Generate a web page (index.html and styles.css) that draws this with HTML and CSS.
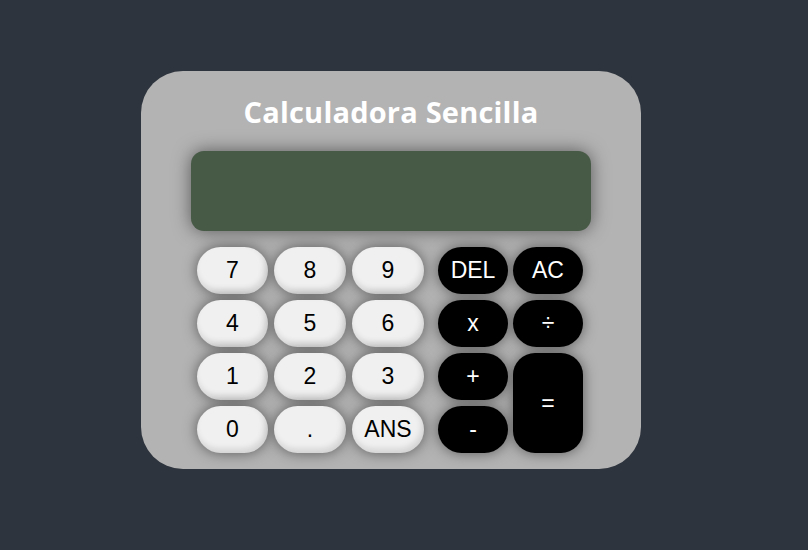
FILE: index.html
```html
<!DOCTYPE html>
<html lang="es">
<head>
<meta charset="utf-8">
<title>Calculadora Sencilla</title>
<link rel="stylesheet" href="styles.css">
</head>
<body>
<main class="page">
  <section class="calc">
    <h1 class="title">Calculadora Sencilla</h1>
    <div class="display"></div>
    <div class="keys">
      <div class="pad">
        <button class="key light">7</button>
        <button class="key light">8</button>
        <button class="key light">9</button>
        <button class="key light">4</button>
        <button class="key light">5</button>
        <button class="key light">6</button>
        <button class="key light">1</button>
        <button class="key light">2</button>
        <button class="key light">3</button>
        <button class="key light">0</button>
        <button class="key light">.</button>
        <button class="key light">ANS</button>
      </div>
      <div class="ops">
        <button class="key dark">DEL</button>
        <button class="key dark">AC</button>
        <button class="key dark">x</button>
        <button class="key dark">÷</button>
        <button class="key dark">+</button>
        <button class="key dark equals">=</button>
        <button class="key dark">-</button>
      </div>
    </div>
  </section>
</main>
</body>
</html>
```

FILE: styles.css
```css
* { box-sizing: border-box; }
html, body { margin: 0; padding: 0; }
body {
  background: #2e343d;
  width: 808px;
  height: 550px;
  overflow: hidden;
  font-family: "Liberation Sans", Arial, sans-serif;
}
.page {
  padding-top: 71px;
  padding-left: 141px;
}
.calc {
  width: 500px;
  height: 398px;
  background: #b3b3b3;
  border-radius: 42px;
  padding: 23px 50px 0 50px;
}
.title {
  margin: 0;
  height: 57px;
  text-align: center;
  color: #ffffff;
  font-family: "Open Sans", "DejaVu Sans", sans-serif;
  font-weight: 700;
  font-size: 29px;
  letter-spacing: 0.2px;
  line-height: 36px;
}
.display {
  width: 400px;
  height: 80px;
  background: #475a46;
  border-radius: 13px;
  box-shadow: 0 0 18px rgba(0, 0, 0, 0.5);
}
.keys {
  display: flex;
  margin-top: 16px;
  padding-left: 6px;
  gap: 14px;
}
.pad {
  display: grid;
  grid-template-columns: 71px 72px 72px;
  grid-auto-rows: 47px;
  column-gap: 6px;
  row-gap: 6px;
}
.ops {
  display: grid;
  grid-template-columns: 70px 70px;
  grid-template-rows: 47px 47px 47px 47px;
  column-gap: 5px;
  row-gap: 6px;
}
.key {
  border: none;
  border-radius: 24px;
  font-family: "Liberation Sans", Arial, sans-serif;
  font-size: 23px;
  padding: 0;
  margin: 0;
  display: flex;
  align-items: center;
  justify-content: center;
  box-shadow: 0 0 14px rgba(0, 0, 0, 0.5);
}
.light {
  background: #f0f0f0;
  color: #000000;
  box-shadow: 0 0 14px rgba(0, 0, 0, 0.5), inset -2px -4px 6px rgba(0, 0, 0, 0.12);
}
.dark {
  background: #000000;
  color: #ffffff;
}
.equals {
  grid-column: 2;
  grid-row: 3 / span 2;
  border-radius: 22px;
}
```
